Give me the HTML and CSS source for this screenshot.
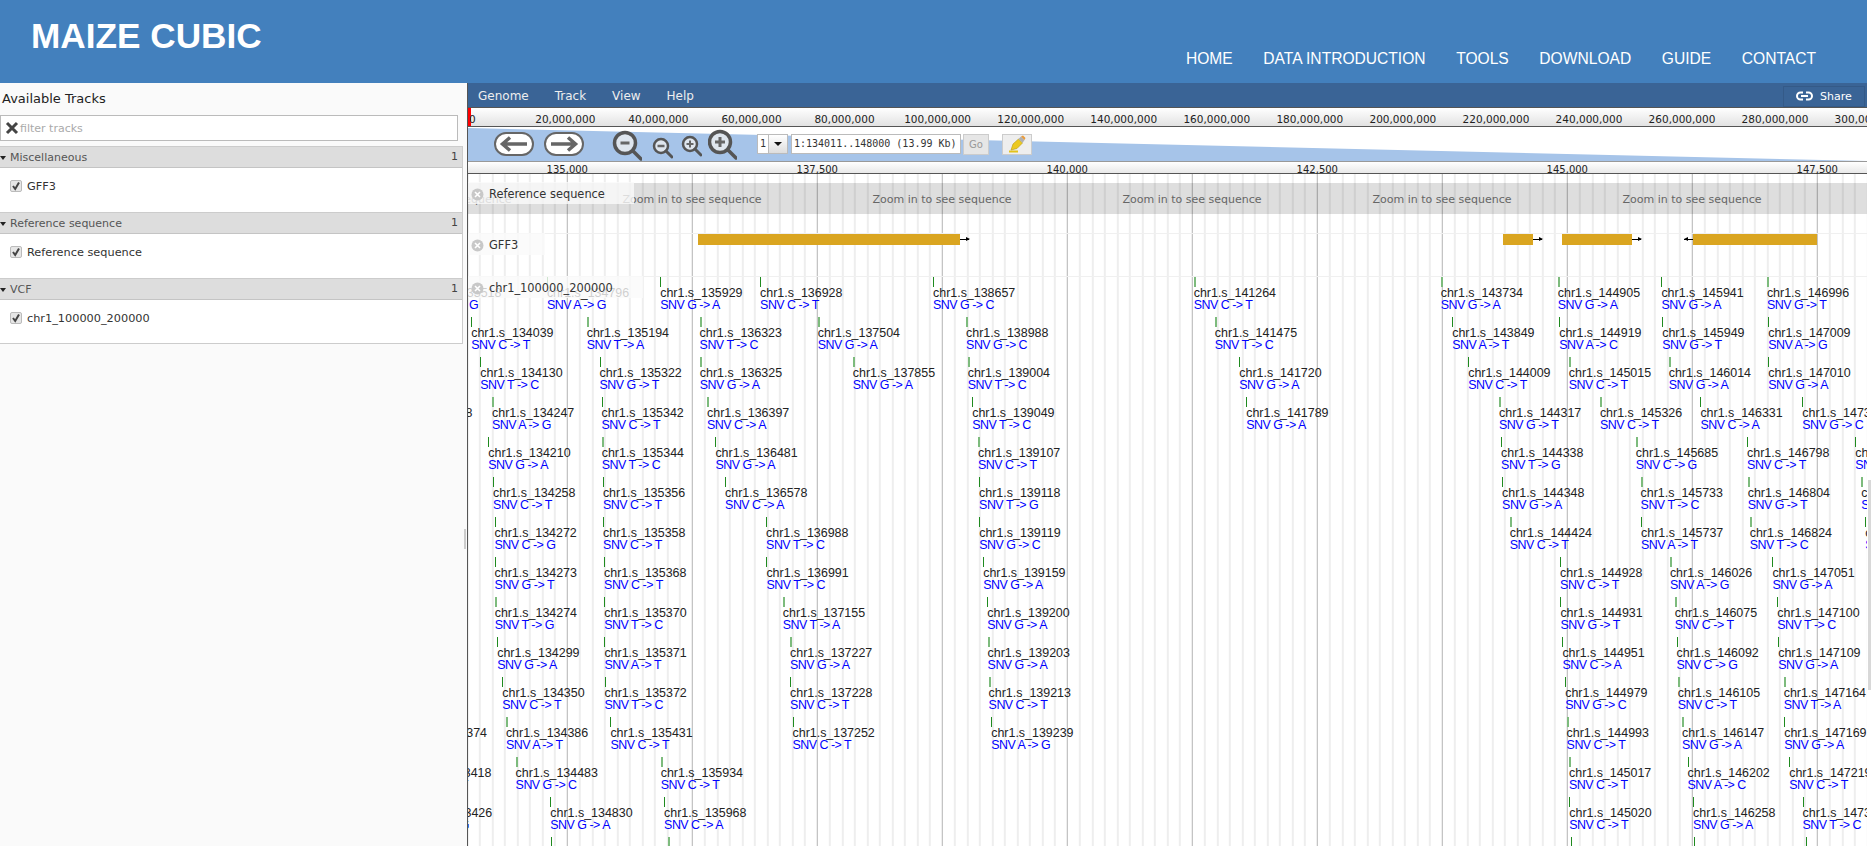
FILE: index.html
```html
<!DOCTYPE html>
<html lang="en">

<head>
    <meta charset="UTF-8">
    <meta name="viewport" content="width=device-width, initial-scale=1.0">
    <title>MAIZE CUBIC</title>
    <link rel="stylesheet" href="styles.css">
</head>

<body>
    <div class="page">
        <header class="site-header">
            <div class="site-title">MAIZE CUBIC</div>
            <nav class="site-nav">
                <a>HOME</a>
                <a>DATA INTRODUCTION</a>
                <a>TOOLS</a>
                <a>DOWNLOAD</a>
                <a>GUIDE</a>
                <a>CONTACT</a>
            </nav>
        </header>

        <div class="browser">
            <aside class="track-panel">
                <div class="track-list">
                    <h2 class="panel-title">Available Tracks</h2>
                    <div class="filter-box">
                        <svg class="filter-clear" width="14" height="14" viewBox="0 0 14 14"><path d="M2 2L12 12M12 2L2 12" stroke="#444" stroke-width="3" fill="none"/></svg>
                        <span class="filter-text">filter tracks</span>
                    </div>

                    <section class="category">
                        <div class="category-head"><span class="twisty"></span><span>Miscellaneous</span><span class="category-count">1</span></div>
                        <div class="category-body">
                            <span class="check"><svg width="10" height="10" viewBox="0 0 10 10"><path d="M2 5L4.2 8L8 1.5" stroke="#444" stroke-width="2" fill="none"/></svg></span>
                            <span>GFF3</span>
                        </div>
                    </section>
                    <section class="category">
                        <div class="category-head"><span class="twisty"></span><span>Reference sequence</span><span class="category-count">1</span></div>
                        <div class="category-body">
                            <span class="check"><svg width="10" height="10" viewBox="0 0 10 10"><path d="M2 5L4.2 8L8 1.5" stroke="#444" stroke-width="2" fill="none"/></svg></span>
                            <span>Reference sequence</span>
                        </div>
                    </section>
                    <section class="category">
                        <div class="category-head"><span class="twisty"></span><span>VCF</span><span class="category-count">1</span></div>
                        <div class="category-body">
                            <span class="check"><svg width="10" height="10" viewBox="0 0 10 10"><path d="M2 5L4.2 8L8 1.5" stroke="#444" stroke-width="2" fill="none"/></svg></span>
                            <span>chr1_100000_200000</span>
                        </div>
                    </section>
                </div>
                <div class="splitter"></div>
            </aside>

            <main class="genome-view">
                <div class="menu-bar">
                    <a>Genome</a>
                    <a>Track</a>
                    <a>View</a>
                    <a>Help</a>
                    <div class="share-btn">
                        <svg width="17" height="10" viewBox="0 0 17 10"><path d="M7 1.5H4.5a3.5 3.5 0 0 0 0 7H7M10 1.5h2.5a3.5 3.5 0 0 1 0 7H10M5 5h7" stroke="#fff" stroke-width="2" fill="none"/></svg>
                        <span>Share</span>
                    </div>
                </div>

                <div class="overview">
                    <div class="overview-mark"></div>
                    <span class="ruler-label" style="left:4.3px">0</span>
                    <span class="ruler-label" style="left:97.3px">20,000,000</span>
                    <span class="ruler-label" style="left:190.4px">40,000,000</span>
                    <span class="ruler-label" style="left:283.5px">60,000,000</span>
                    <span class="ruler-label" style="left:376.5px">80,000,000</span>
                    <span class="ruler-label" style="left:469.6px">100,000,000</span>
                    <span class="ruler-label" style="left:562.7px">120,000,000</span>
                    <span class="ruler-label" style="left:655.7px">140,000,000</span>
                    <span class="ruler-label" style="left:748.8px">160,000,000</span>
                    <span class="ruler-label" style="left:841.8px">180,000,000</span>
                    <span class="ruler-label" style="left:934.9px">200,000,000</span>
                    <span class="ruler-label" style="left:1028px">220,000,000</span>
                    <span class="ruler-label" style="left:1121px">240,000,000</span>
                    <span class="ruler-label" style="left:1214px">260,000,000</span>
                    <span class="ruler-label" style="left:1307px">280,000,000</span>
                    <span class="ruler-label" style="left:1400px">300,000,000</span>
                </div>

                <div class="navbox">
                    <svg class="nav-arrow" width="40" height="24" viewBox="0 0 40 24"><rect x="1" y="1" width="38" height="22" rx="11" fill="#fff" stroke="#666" stroke-width="2"/><path d="M33 12H9M16 5.5L8.5 12L16 18.5" stroke="#666" stroke-width="3.5" fill="none"/></svg>
                    <svg class="nav-arrow nav-next" width="40" height="24" viewBox="0 0 40 24"><rect x="1" y="1" width="38" height="22" rx="11" fill="#fff" stroke="#666" stroke-width="2"/><path d="M7 12H31M24 5.5L31.5 12L24 18.5" stroke="#666" stroke-width="3.5" fill="none"/></svg>

                    <svg class="zoom-out-big" width="30" height="34" viewBox="0 0 30 34"><circle cx="13" cy="16" r="10.5" fill="#dfe6ee" stroke="#555" stroke-width="3.5"/><path d="M8.5 16H17.5" stroke="#666" stroke-width="3"/><path d="M21 24L29 32" stroke="#555" stroke-width="3.5" stroke-linecap="round"/></svg>
                    <svg class="zoom-out" width="21" height="34" viewBox="0 0 21 34"><circle cx="9" cy="19" r="7" fill="#dfe6ee" stroke="#555" stroke-width="2.5"/><path d="M5.5 19H12.5" stroke="#666" stroke-width="2.5"/><path d="M14 24L20 30" stroke="#555" stroke-width="3" stroke-linecap="round"/></svg>
                    <svg class="zoom-in" width="21" height="34" viewBox="0 0 21 34"><circle cx="9" cy="17" r="7" fill="#dfe6ee" stroke="#555" stroke-width="2.5"/><path d="M5.5 17H12.5M9 13.5V20.5" stroke="#666" stroke-width="2"/><path d="M14 22L20 28" stroke="#555" stroke-width="3" stroke-linecap="round"/></svg>
                    <svg class="zoom-in-big" width="29" height="34" viewBox="0 0 29 34"><circle cx="12" cy="15" r="10.5" fill="#dfe6ee" stroke="#555" stroke-width="3.5"/><path d="M7 15H17M12 10V20" stroke="#666" stroke-width="3"/><path d="M20 23L28 31" stroke="#555" stroke-width="3.5" stroke-linecap="round"/></svg>

                    <div class="ref-select">
                        <span class="ref-value">1</span>
                        <span class="ref-arrow"></span>
                    </div>
                    <div class="location-box">1:134011..148000 (13.99 Kb)</div>
                    <div class="go-btn">Go</div>
                    <div class="highlight-btn">
                        <svg width="18" height="18" viewBox="0 0 18 18"><path d="M1 16.5H10" stroke="#e3c21b" stroke-width="2"/><path d="M3 15L5 9L10.5 4L14.5 8L9 13.5Z" fill="#ecc91f" stroke="#b99a12" stroke-width="0.6"/><path d="M10.5 4L13 1.5L16.5 5L14.5 8Z" fill="#b0b0b0"/><path d="M13 1.5L15 0.5L17.5 3L16.5 5Z" fill="#e89a3c"/></svg>
                    </div>
                </div>

                <div class="scale-bar">
                    <span class="ruler-label" style="left:99.3px">135,000</span>
                    <span class="ruler-label" style="left:349.3px">137,500</span>
                    <span class="ruler-label" style="left:599.3px">140,000</span>
                    <span class="ruler-label" style="left:849.3px">142,500</span>
                    <span class="ruler-label" style="left:1099.3px">145,000</span>
                    <span class="ruler-label" style="left:1349.3px">147,500</span>
                </div>

                <div class="tracks">
                    <section class="track track-ref">
                        <div class="track-label">
                            <svg class="track-close" width="13" height="13" viewBox="0 0 13 13"><circle cx="6.5" cy="6.5" r="6" fill="#c8c8c8"/><path d="M4 4L9 9M9 4L4 9" stroke="#fff" stroke-width="1.6"/></svg>
                            <span>Reference sequence</span>
                        </div>
                        <div class="seq-band">
                            <span class="seq-note" style="left:-26px">Zoom in to see sequence</span>
                            <span class="seq-note" style="left:224px">Zoom in to see sequence</span>
                            <span class="seq-note" style="left:474px">Zoom in to see sequence</span>
                            <span class="seq-note" style="left:724px">Zoom in to see sequence</span>
                            <span class="seq-note" style="left:974px">Zoom in to see sequence</span>
                            <span class="seq-note" style="left:1224px">Zoom in to see sequence</span>
                        </div>
                    </section>

                    <section class="track track-gff">
                        <div class="track-label">
                            <svg class="track-close" width="13" height="13" viewBox="0 0 13 13"><circle cx="6.5" cy="6.5" r="6" fill="#c8c8c8"/><path d="M4 4L9 9M9 4L4 9" stroke="#fff" stroke-width="1.6"/></svg>
                            <span>GFF3</span>
                        </div>
                        <div class="gene" style="left:230px;width:262px"></div>
                        <div class="gene" style="left:1035px;width:30px"></div>
                        <div class="gene" style="left:1094px;width:70px"></div>
                        <div class="gene gene-rev" style="left:1225px;width:124px"></div>
                    </section>

                    <section class="track track-vcf">
                        <div class="track-label">
                            <svg class="track-close" width="13" height="13" viewBox="0 0 13 13"><circle cx="6.5" cy="6.5" r="6" fill="#c8c8c8"/><path d="M4 4L9 9M9 4L4 9" stroke="#fff" stroke-width="1.6"/></svg>
                            <span>chr1_100000_200000</span>
                        </div>

                        <div class="row">
                            <div class="snp" style="left:-48.9px"><b>chr1.s_133518</b><i>SNV A -&gt; G</i></div>
                            <div class="snp" style="left:78.9px"><b>chr1.s_134796</b><i>SNV A -&gt; G</i></div>
                            <div class="snp" style="left:192.2px"><b>chr1.s_135929</b><i>SNV G -&gt; A</i></div>
                            <div class="snp" style="left:292.1px"><b>chr1.s_136928</b><i>SNV C -&gt; T</i></div>
                            <div class="snp" style="left:465px"><b>chr1.s_138657</b><i>SNV G -&gt; C</i></div>
                            <div class="snp wide" style="left:725.7px"><b>chr1.s_141264</b><i>SNV C -&gt; T</i></div>
                            <div class="snp wide" style="left:972.7px"><b>chr1.s_143734</b><i>SNV G -&gt; A</i></div>
                            <div class="snp wide" style="left:1089.8px"><b>chr1.s_144905</b><i>SNV G -&gt; A</i></div>
                            <div class="snp" style="left:1193.4px"><b>chr1.s_145941</b><i>SNV G -&gt; A</i></div>
                            <div class="snp wide" style="left:1298.9px"><b>chr1.s_146996</b><i>SNV G -&gt; T</i></div>
                        </div>
                        <div class="row">
                            <div class="snp" style="left:3.2px"><b>chr1.s_134039</b><i>SNV C -&gt; T</i></div>
                            <div class="snp wide" style="left:118.7px"><b>chr1.s_135194</b><i>SNV T -&gt; A</i></div>
                            <div class="snp wide" style="left:231.6px"><b>chr1.s_136323</b><i>SNV T -&gt; C</i></div>
                            <div class="snp wide" style="left:349.7px"><b>chr1.s_137504</b><i>SNV G -&gt; A</i></div>
                            <div class="snp wide" style="left:498.1px"><b>chr1.s_138988</b><i>SNV G -&gt; C</i></div>
                            <div class="snp wide" style="left:746.8px"><b>chr1.s_141475</b><i>SNV T -&gt; C</i></div>
                            <div class="snp" style="left:984.2px"><b>chr1.s_143849</b><i>SNV A -&gt; T</i></div>
                            <div class="snp" style="left:1091.2px"><b>chr1.s_144919</b><i>SNV A -&gt; C</i></div>
                            <div class="snp" style="left:1194.2px"><b>chr1.s_145949</b><i>SNV G -&gt; T</i></div>
                            <div class="snp" style="left:1300.2px"><b>chr1.s_147009</b><i>SNV A -&gt; G</i></div>
                        </div>
                        <div class="row">
                            <div class="snp" style="left:12.3px"><b>chr1.s_134130</b><i>SNV T -&gt; C</i></div>
                            <div class="snp" style="left:131.5px"><b>chr1.s_135322</b><i>SNV G -&gt; T</i></div>
                            <div class="snp wide" style="left:231.8px"><b>chr1.s_136325</b><i>SNV G -&gt; A</i></div>
                            <div class="snp wide" style="left:384.8px"><b>chr1.s_137855</b><i>SNV G -&gt; A</i></div>
                            <div class="snp wide" style="left:499.7px"><b>chr1.s_139004</b><i>SNV T -&gt; C</i></div>
                            <div class="snp" style="left:771.3px"><b>chr1.s_141720</b><i>SNV G -&gt; A</i></div>
                            <div class="snp" style="left:1000.2px"><b>chr1.s_144009</b><i>SNV C -&gt; T</i></div>
                            <div class="snp wide" style="left:1100.8px"><b>chr1.s_145015</b><i>SNV C -&gt; T</i></div>
                            <div class="snp wide" style="left:1200.7px"><b>chr1.s_146014</b><i>SNV G -&gt; A</i></div>
                            <div class="snp" style="left:1300.3px"><b>chr1.s_147010</b><i>SNV G -&gt; A</i></div>
                        </div>
                        <div class="row">
                            <div class="snp" style="left:-77.9px"><b>chr1.s_133228</b><i>SNV A -&gt; G</i></div>
                            <div class="snp wide" style="left:24px"><b>chr1.s_134247</b><i>SNV A -&gt; G</i></div>
                            <div class="snp" style="left:133.5px"><b>chr1.s_135342</b><i>SNV C -&gt; T</i></div>
                            <div class="snp wide" style="left:239px"><b>chr1.s_136397</b><i>SNV C -&gt; A</i></div>
                            <div class="snp" style="left:504.2px"><b>chr1.s_139049</b><i>SNV T -&gt; C</i></div>
                            <div class="snp" style="left:778.2px"><b>chr1.s_141789</b><i>SNV G -&gt; A</i></div>
                            <div class="snp wide" style="left:1031px"><b>chr1.s_144317</b><i>SNV G -&gt; T</i></div>
                            <div class="snp wide" style="left:1131.9px"><b>chr1.s_145326</b><i>SNV C -&gt; T</i></div>
                            <div class="snp" style="left:1232.4px"><b>chr1.s_146331</b><i>SNV C -&gt; A</i></div>
                            <div class="snp" style="left:1334.3px"><b>chr1.s_147350</b><i>SNV G -&gt; C</i></div>
                        </div>
                        <div class="row">
                            <div class="snp" style="left:20.3px"><b>chr1.s_134210</b><i>SNV G -&gt; A</i></div>
                            <div class="snp wide" style="left:133.7px"><b>chr1.s_135344</b><i>SNV T -&gt; C</i></div>
                            <div class="snp" style="left:247.4px"><b>chr1.s_136481</b><i>SNV G -&gt; A</i></div>
                            <div class="snp wide" style="left:510px"><b>chr1.s_139107</b><i>SNV C -&gt; T</i></div>
                            <div class="snp" style="left:1033.1px"><b>chr1.s_144338</b><i>SNV T -&gt; G</i></div>
                            <div class="snp wide" style="left:1167.8px"><b>chr1.s_145685</b><i>SNV C -&gt; G</i></div>
                            <div class="snp" style="left:1279.1px"><b>chr1.s_146798</b><i>SNV C -&gt; T</i></div>
                            <div class="snp" style="left:1387.3px"><b>chr1.s_147880</b><i>SNV A -&gt; G</i></div>
                        </div>
                        <div class="row">
                            <div class="snp" style="left:25.1px"><b>chr1.s_134258</b><i>SNV C -&gt; T</i></div>
                            <div class="snp" style="left:134.9px"><b>chr1.s_135356</b><i>SNV C -&gt; T</i></div>
                            <div class="snp" style="left:257.1px"><b>chr1.s_136578</b><i>SNV C -&gt; A</i></div>
                            <div class="snp" style="left:511.1px"><b>chr1.s_139118</b><i>SNV T -&gt; G</i></div>
                            <div class="snp" style="left:1034.1px"><b>chr1.s_144348</b><i>SNV G -&gt; A</i></div>
                            <div class="snp wide" style="left:1172.6px"><b>chr1.s_145733</b><i>SNV T -&gt; C</i></div>
                            <div class="snp wide" style="left:1279.7px"><b>chr1.s_146804</b><i>SNV G -&gt; T</i></div>
                            <div class="snp wide" style="left:1393.3px"><b>chr1.s_147940</b><i>SNV C -&gt; T</i></div>
                        </div>
                        <div class="row">
                            <div class="snp" style="left:26.5px"><b>chr1.s_134272</b><i>SNV C -&gt; G</i></div>
                            <div class="snp" style="left:135.1px"><b>chr1.s_135358</b><i>SNV C -&gt; T</i></div>
                            <div class="snp" style="left:298.1px"><b>chr1.s_136988</b><i>SNV T -&gt; C</i></div>
                            <div class="snp" style="left:511.2px"><b>chr1.s_139119</b><i>SNV G -&gt; C</i></div>
                            <div class="snp wide" style="left:1041.7px"><b>chr1.s_144424</b><i>SNV C -&gt; T</i></div>
                            <div class="snp" style="left:1173px"><b>chr1.s_145737</b><i>SNV A -&gt; T</i></div>
                            <div class="snp wide" style="left:1281.7px"><b>chr1.s_146824</b><i>SNV T -&gt; C</i></div>
                            <div class="snp" style="left:1397.3px"><b>chr1.s_147980</b><i>SNV C -&gt; T</i></div>
                        </div>
                        <div class="row">
                            <div class="snp" style="left:26.6px"><b>chr1.s_134273</b><i>SNV G -&gt; T</i></div>
                            <div class="snp" style="left:136.1px"><b>chr1.s_135368</b><i>SNV C -&gt; T</i></div>
                            <div class="snp" style="left:298.4px"><b>chr1.s_136991</b><i>SNV T -&gt; C</i></div>
                            <div class="snp" style="left:515.2px"><b>chr1.s_139159</b><i>SNV G -&gt; A</i></div>
                            <div class="snp" style="left:1092.1px"><b>chr1.s_144928</b><i>SNV C -&gt; T</i></div>
                            <div class="snp wide" style="left:1201.9px"><b>chr1.s_146026</b><i>SNV A -&gt; G</i></div>
                            <div class="snp" style="left:1304.4px"><b>chr1.s_147051</b><i>SNV G -&gt; A</i></div>
                        </div>
                        <div class="row">
                            <div class="snp wide" style="left:26.7px"><b>chr1.s_134274</b><i>SNV T -&gt; G</i></div>
                            <div class="snp" style="left:136.3px"><b>chr1.s_135370</b><i>SNV T -&gt; C</i></div>
                            <div class="snp wide" style="left:314.8px"><b>chr1.s_137155</b><i>SNV T -&gt; A</i></div>
                            <div class="snp" style="left:519.3px"><b>chr1.s_139200</b><i>SNV G -&gt; A</i></div>
                            <div class="snp" style="left:1092.4px"><b>chr1.s_144931</b><i>SNV G -&gt; T</i></div>
                            <div class="snp wide" style="left:1206.8px"><b>chr1.s_146075</b><i>SNV C -&gt; T</i></div>
                            <div class="snp" style="left:1309.3px"><b>chr1.s_147100</b><i>SNV T -&gt; C</i></div>
                        </div>
                        <div class="row">
                            <div class="snp" style="left:29.2px"><b>chr1.s_134299</b><i>SNV G -&gt; A</i></div>
                            <div class="snp" style="left:136.4px"><b>chr1.s_135371</b><i>SNV A -&gt; T</i></div>
                            <div class="snp wide" style="left:322px"><b>chr1.s_137227</b><i>SNV G -&gt; A</i></div>
                            <div class="snp wide" style="left:519.6px"><b>chr1.s_139203</b><i>SNV G -&gt; A</i></div>
                            <div class="snp" style="left:1094.4px"><b>chr1.s_144951</b><i>SNV C -&gt; A</i></div>
                            <div class="snp" style="left:1208.5px"><b>chr1.s_146092</b><i>SNV C -&gt; G</i></div>
                            <div class="snp" style="left:1310.2px"><b>chr1.s_147109</b><i>SNV G -&gt; A</i></div>
                        </div>
                        <div class="row">
                            <div class="snp" style="left:34.3px"><b>chr1.s_134350</b><i>SNV C -&gt; T</i></div>
                            <div class="snp" style="left:136.5px"><b>chr1.s_135372</b><i>SNV T -&gt; C</i></div>
                            <div class="snp" style="left:322.1px"><b>chr1.s_137228</b><i>SNV C -&gt; T</i></div>
                            <div class="snp wide" style="left:520.6px"><b>chr1.s_139213</b><i>SNV C -&gt; T</i></div>
                            <div class="snp" style="left:1097.2px"><b>chr1.s_144979</b><i>SNV G -&gt; C</i></div>
                            <div class="snp wide" style="left:1209.8px"><b>chr1.s_146105</b><i>SNV C -&gt; T</i></div>
                            <div class="snp wide" style="left:1315.7px"><b>chr1.s_147164</b><i>SNV T -&gt; A</i></div>
                        </div>
                        <div class="row">
                            <div class="snp" style="left:-63.3px"><b>chr1.s_133374</b><i>SNV C -&gt; T</i></div>
                            <div class="snp wide" style="left:37.9px"><b>chr1.s_134386</b><i>SNV A -&gt; T</i></div>
                            <div class="snp" style="left:142.4px"><b>chr1.s_135431</b><i>SNV C -&gt; T</i></div>
                            <div class="snp" style="left:324.5px"><b>chr1.s_137252</b><i>SNV C -&gt; T</i></div>
                            <div class="snp" style="left:523.2px"><b>chr1.s_139239</b><i>SNV A -&gt; G</i></div>
                            <div class="snp wide" style="left:1098.6px"><b>chr1.s_144993</b><i>SNV C -&gt; T</i></div>
                            <div class="snp wide" style="left:1214px"><b>chr1.s_146147</b><i>SNV G -&gt; A</i></div>
                            <div class="snp" style="left:1316.2px"><b>chr1.s_147169</b><i>SNV G -&gt; A</i></div>
                        </div>
                        <div class="row">
                            <div class="snp" style="left:-58.9px"><b>chr1.s_133418</b><i>SNV C -&gt; T</i></div>
                            <div class="snp wide" style="left:47.6px"><b>chr1.s_134483</b><i>SNV G -&gt; C</i></div>
                            <div class="snp wide" style="left:192.7px"><b>chr1.s_135934</b><i>SNV C -&gt; T</i></div>
                            <div class="snp wide" style="left:1101px"><b>chr1.s_145017</b><i>SNV C -&gt; T</i></div>
                            <div class="snp" style="left:1219.5px"><b>chr1.s_146202</b><i>SNV A -&gt; C</i></div>
                            <div class="snp" style="left:1321.2px"><b>chr1.s_147219</b><i>SNV C -&gt; T</i></div>
                        </div>
                        <div class="row">
                            <div class="snp" style="left:-58.1px"><b>chr1.s_133426</b><i>SNV A -&gt; G</i></div>
                            <div class="snp" style="left:82.3px"><b>chr1.s_134830</b><i>SNV G -&gt; A</i></div>
                            <div class="snp" style="left:196.1px"><b>chr1.s_135968</b><i>SNV C -&gt; A</i></div>
                            <div class="snp" style="left:1101.3px"><b>chr1.s_145020</b><i>SNV C -&gt; T</i></div>
                            <div class="snp" style="left:1225.1px"><b>chr1.s_146258</b><i>SNV G -&gt; A</i></div>
                            <div class="snp" style="left:1334.5px"><b>chr1.s_147352</b><i>SNV T -&gt; C</i></div>
                        </div>
                        <div class="row">
                            <div class="snp" style="left:82.6px"></div>
                            <div class="snp wide" style="left:200px"></div>
                            <div class="snp" style="left:1103.3px"></div>
                            <div class="snp" style="left:1226px"></div>
                            <div class="snp" style="left:1338px"></div>
                        </div>
                    </section>
                </div>
            </main>
        </div>
    </div>
    <div class="page-scroll"></div>
</body>

</html>
```

FILE: styles.css
```css
html,
body {
    height: 100%;
    margin: 0;
    overflow: hidden;
    background-color: #fff;
}

body {
    display: flex;
    font-family: "DejaVu Sans", sans-serif;
    color: #333;
}

.page {
    width: 1867px;
    height: 846px;
    display: flex;
    flex-direction: column;
    flex: none;
}

.page-scroll {
    width: 3px;
    height: 210px;
    margin: 480px 0 0 1px;
    background-color: #d8d8d8;
}

/* site header */
.site-header {
    height: 83px;
    flex: none;
    display: flex;
    justify-content: space-between;
    background-color: #4380bd;
    color: #fff;
    font-family: "Liberation Sans", Arial, sans-serif;
}

.site-title {
    margin: 16px 0 0 31px;
    font-size: 35.2px;
    line-height: 40px;
    font-weight: bold;
}

.site-nav {
    display: flex;
    gap: 30.6px;
    padding: 50px 51px 0 0;
    font-size: 15.6px;
    line-height: 18px;
}

/* left panel */
.browser {
    flex: 1;
    display: flex;
    min-height: 0;
}

.track-panel {
    width: 467px;
    flex: none;
    display: flex;
    background-color: #fafafa;
}

.track-list {
    width: 463px;
    flex: none;
}

.panel-title {
    margin: 0;
    padding: 8px 0 0 2px;
    height: 25px;
    box-sizing: border-box;
    font-size: 13px;
    line-height: 16px;
    font-weight: normal;
    color: #222;
}

.filter-box {
    width: 458px;
    height: 26px;
    box-sizing: border-box;
    margin: 7px 0 5px;
    display: flex;
    align-items: center;
    padding-left: 4px;
    border: 1px solid #bbb;
    background-color: #fff;
}

.filter-text {
    margin-left: 1px;
    font-size: 11px;
    color: #aaa;
}

.category {
    border-right: 1px solid #ccc;
}

.category-head {
    height: 22px;
    box-sizing: border-box;
    display: flex;
    align-items: center;
    padding-top: 1px;
    border-top: 1px solid #ccc;
    border-bottom: 1px solid #c4c4c4;
    background-color: #ddd;
    font-size: 11px;
    color: #555;
}

.twisty {
    width: 0;
    height: 0;
    margin: 0 4px 0 0;
    border-left: 3.5px solid transparent;
    border-right: 3.5px solid transparent;
    border-top: 4px solid #222;
}

.category-count {
    margin: -3px 4px 0 auto;
    color: #444;
}

.category-body {
    height: 44px;
    box-sizing: border-box;
    padding: 12px 0 0 10px;
    display: flex;
    align-items: flex-start;
    gap: 5px;
    background-color: #fff;
    font-size: 11.3px;
    line-height: 13px;
}

.category:last-child .category-body {
    border-bottom: 1px solid #ccc;
}

.check {
    width: 12px;
    height: 12px;
    box-sizing: border-box;
    display: flex;
    align-items: center;
    justify-content: center;
    border: 1px solid #bbb;
    border-radius: 2px;
    background-color: #e6e6e6;
}

.splitter {
    width: 2px;
    height: 20px;
    margin: 446px 0 0 1px;
    background-color: #ccc;
}

/* genome view */
.genome-view {
    flex: 1;
    min-width: 0;
    display: flex;
    flex-direction: column;
    border-left: 1px solid #555;
}

.menu-bar {
    height: 25px;
    box-sizing: border-box;
    flex: none;
    display: flex;
    align-items: center;
    gap: 26px;
    padding: 2px 2px 0 10px;
    background-color: #3a6496;
    border-bottom: 1px solid #555;
    font-size: 12px;
    color: #eee;
}

.share-btn {
    margin-left: auto;
    width: 82px;
    height: 21px;
    box-sizing: border-box;
    display: flex;
    align-items: center;
    gap: 7px;
    padding-left: 12px;
    border: 1px solid #345a88;
    background-color: #3a6496;
    font-size: 11px;
    color: #fff;
}

.overview {
    position: relative;
    height: 19px;
    box-sizing: border-box;
    flex: none;
    overflow: hidden;
    border-bottom: 1px solid #555;
    background: linear-gradient(#fff, #e2e2e2);
    font-size: 10.5px;
}

.overview-mark {
    position: absolute;
    left: 0;
    top: 0;
    width: 3px;
    height: 18px;
    background-color: #f00;
}

.ruler-label {
    position: absolute;
    top: 4px;
    transform: translateX(-50%);
    line-height: 14px;
    white-space: nowrap;
    color: #222;
}

.navbox {
    position: relative;
    isolation: isolate;
    height: 34px;
    flex: none;
    display: flex;
    align-items: center;
    padding-left: 26px;
    background-color: #fff;
}

.navbox::before {
    content: "";
    position: absolute;
    inset: 0;
    z-index: -1;
    background-color: #a6c4e9;
    clip-path: polygon(0 1px, 100% 100%, 0 100%);
}

.nav-next {
    margin-left: 10px;
}

.zoom-out-big {
    margin-left: 28px;
}

.zoom-out {
    margin-left: 10px;
}

.zoom-in {
    margin-left: 8px;
}

.zoom-in-big {
    margin-left: 6px;
}

.ref-select {
    width: 31px;
    height: 20px;
    box-sizing: border-box;
    margin-left: 20px;
    display: flex;
    border: 1px solid #bbb;
    background-color: #fff;
    font-family: "DejaVu Sans Mono", monospace;
    font-size: 10px;
    line-height: 18px;
}

.ref-value {
    width: 10px;
    text-align: center;
}

.ref-arrow {
    flex: 1;
    position: relative;
    border-left: 1px solid #bbb;
    background: linear-gradient(#fff, #ddd);
}

.ref-arrow::after {
    content: "";
    position: absolute;
    left: 5px;
    top: 7px;
    border-left: 4px solid transparent;
    border-right: 4px solid transparent;
    border-top: 4px solid #111;
}

.location-box {
    width: 170px;
    height: 20px;
    box-sizing: border-box;
    margin-left: 3px;
    padding-left: 2px;
    border: 1px solid #bbb;
    background-color: #fff;
    font-family: "DejaVu Sans Mono", monospace;
    font-size: 10px;
    line-height: 18px;
    white-space: nowrap;
}

.go-btn {
    width: 26px;
    height: 21px;
    box-sizing: border-box;
    margin-left: 2px;
    border: 1px solid #ccc;
    background-color: #e6e6e6;
    font-size: 10px;
    line-height: 20px;
    text-align: center;
    color: #999;
}

.highlight-btn {
    width: 30px;
    height: 21px;
    box-sizing: border-box;
    margin-left: 13px;
    display: flex;
    align-items: center;
    justify-content: center;
    border: 1px solid #ccc;
    background-color: #eee;
}

.scale-bar {
    position: relative;
    height: 13px;
    box-sizing: border-box;
    flex: none;
    border-top: 1px solid #999;
    border-bottom: 1px solid #555;
    background: linear-gradient(#fff, #e8e8e8);
    font-size: 10px;
}

.scale-bar .ruler-label {
    top: 1px;
    line-height: 13px;
}

/* tracks */
.tracks {
    flex: 1;
    min-height: 0;
    overflow: hidden;
    background-image:
        linear-gradient(90deg, #b8b8b8 1.5px, transparent 1.5px),
        repeating-linear-gradient(90deg, #eee 0, #eee 1.5px, transparent 1.5px, transparent 12.5px);
    background-size: 125px 100%;
    background-position: 98.8px 0;
    background-color: #fff;
}

.track {
    position: relative;
}

.track-ref {
    height: 59px;
}

.track-gff {
    height: 43px;
    border-top: 1px solid #f0f0f0;
    box-sizing: border-box;
}

.track-vcf {
    border-top: 1px solid #f0f0f0;
}

.track-label {
    position: absolute;
    left: 0;
    top: -1px;
    z-index: 2;
    height: 22px;
    box-sizing: border-box;
    padding: 2px 30px 0 3px;
    display: flex;
    align-items: center;
    gap: 5px;
    background-color: rgba(250, 250, 250, 0.8);
    font-size: 11.4px;
    color: #333;
}

.track-ref .track-label {
    top: 8px;
    padding-right: 29px;
}

.track-gff .track-label {
    padding-right: 27px;
}

.track-vcf .track-label {
    padding-right: 30px;
}

.track-close {
    flex: none;
}

.seq-band {
    position: absolute;
    left: 0;
    right: 0;
    top: 9px;
    height: 31px;
    overflow: hidden;
    background-color: rgba(0, 0, 0, 0.13);
    font-size: 11px;
    line-height: 34px;
    color: #666;
}

.seq-note {
    position: absolute;
    left: 0;
    top: 0;
    transform: translateX(-50%);
    white-space: nowrap;
}

.gene {
    position: absolute;
    top: 0;
    height: 11px;
    background-color: #daa520;
}

.gene::after {
    content: "";
    position: absolute;
    left: 100%;
    top: 5px;
    width: 9px;
    height: 1px;
    background-color: #000;
}

.gene::before {
    content: "";
    position: absolute;
    left: calc(100% + 6px);
    top: 3px;
    border-top: 2.5px solid transparent;
    border-bottom: 2.5px solid transparent;
    border-left: 4px solid #000;
}

.gene-rev::after {
    left: -9px;
}

.gene-rev::before {
    left: -9px;
    border-left: 0;
    border-right: 4px solid #000;
}

.row {
    position: relative;
    height: 40px;
}

.snp {
    position: absolute;
    top: 0;
    padding-top: 10px;
    white-space: nowrap;
    font-family: "Liberation Sans", Arial, sans-serif;
    font-size: 12.45px;
    line-height: 12px;
}

.snp::before {
    content: "";
    position: absolute;
    left: 0;
    top: 0;
    width: 1px;
    height: 10px;
    background-color: #1f8a1f;
}

.snp.wide::before {
    width: 2px;
    background-color: #7dbb7d;
}

.snp b,
.snp i {
    display: block;
    font-weight: normal;
    font-style: normal;
}

.snp b {
    color: #222;
}

.snp i {
    letter-spacing: -0.5px;
    color: #00f;
}
```
